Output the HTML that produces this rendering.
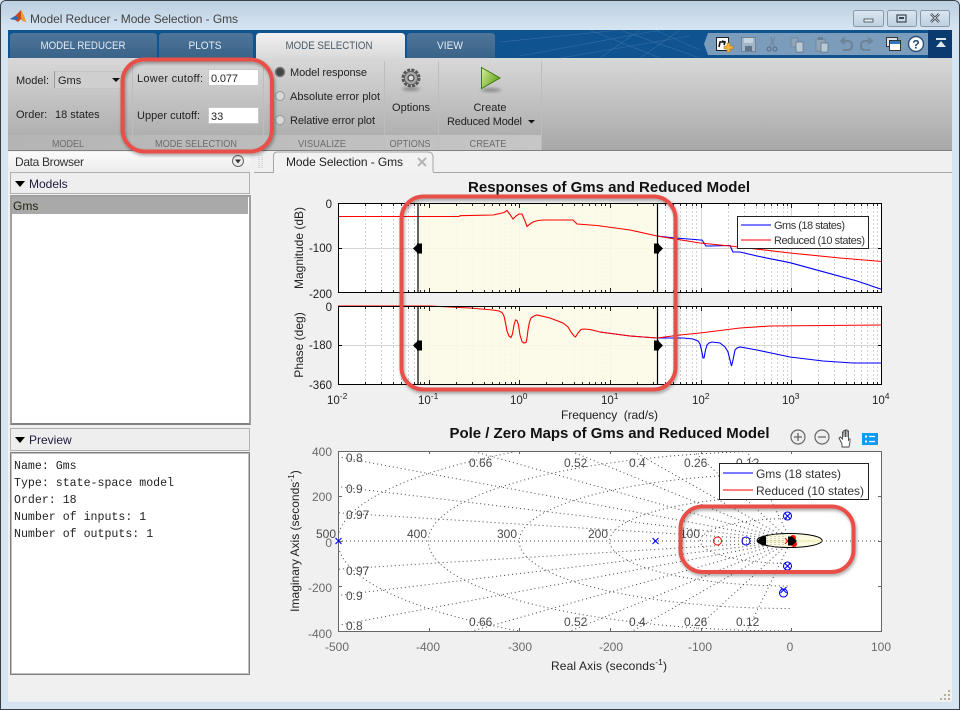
<!DOCTYPE html>
<html><head><meta charset="utf-8"><title>Model Reducer</title>
<style>
html,body{margin:0;padding:0;background:#d6e4f1}
body{width:960px;height:710px;overflow:hidden;position:relative;font-family:"Liberation Sans",sans-serif}
.a{position:absolute}
svg text{font-family:"Liberation Sans",sans-serif}
</style></head><body>
<div class="a" style="left:0;top:0;width:958px;height:708px;border:1px solid #3a3f44;border-radius:6px 6px 0 0;background:#d6e4f1"></div>
<div class="a" style="left:1px;top:1px;width:958px;height:29px;border-radius:5px 5px 0 0;background:linear-gradient(#bccfe0,#d6e5f2)"></div>
<div class="a" style="left:8px;top:30px;width:944px;height:28px;background:#0f5391"></div>
<div class="a" style="left:928px;top:30px;width:24px;height:28px;background:#0b3a70"></div>
<div class="a" style="left:8px;top:58px;width:944px;height:92px;background:linear-gradient(#d8d8d8,#a8a8a8)"></div>
<div class="a" style="left:8px;top:135px;width:533px;height:15px;background:linear-gradient(90deg,#b4b4b4,#c6c6c6)"></div>
<div class="a" style="left:8px;top:150px;width:944px;height:552px;background:#f0f0f0;border-top:1px solid #808080;box-sizing:border-box"></div>
<div class="a" style="left:9px;top:152px;width:241px;height:20px;background:linear-gradient(#fbfbfb,#ececec)"></div>
<div class="a" style="left:254px;top:172px;width:698px;height:1px;background:#a6a6a6"></div>
<div class="a" style="left:10px;top:172px;width:238px;height:20px;border:1px solid #b0b0b0;background:#eee"></div>
<div class="a" style="left:10px;top:195px;width:237px;height:226px;border:2px solid #8a8a8a;border-color:#a0a0a0 #a0a0a0 #808080 #a0a0a0;background:#fff"></div>
<div class="a" style="left:12px;top:197px;width:236px;height:17px;background:#a9a9a9"></div>
<div class="a" style="left:10px;top:428px;width:238px;height:21px;border:1px solid #b0b0b0;background:#eee"></div>
<div class="a" style="left:10px;top:452px;width:238px;height:221px;border:1px solid #808080;background:#fff;box-shadow:inset 0 0 0 1px #c0c0c0"></div>

<svg class="a" style="left:0;top:0" width="960" height="710" viewBox="0 0 960 710" xmlns="http://www.w3.org/2000/svg">
<defs>
<linearGradient id="tb" x1="0" y1="0" x2="0" y2="1"><stop offset="0" stop-color="#4f7599"/><stop offset="1" stop-color="#3a6389"/></linearGradient>
<linearGradient id="ta" x1="0" y1="0" x2="0" y2="1"><stop offset="0" stop-color="#f0f0f0"/><stop offset="1" stop-color="#dadada"/></linearGradient>
<linearGradient id="pl" x1="0" y1="0" x2="1" y2="0.6"><stop offset="0" stop-color="#d8ee9c"/><stop offset="1" stop-color="#5fa31a"/></linearGradient>
<linearGradient id="wb" x1="0" y1="0" x2="0" y2="1"><stop offset="0" stop-color="#dbe6f0"/><stop offset="1" stop-color="#bfd0e0"/></linearGradient>
<clipPath id="c3"><rect x="338" y="451" width="544" height="180"/></clipPath>
<filter id="sh" x="-10%" y="-10%" width="120%" height="120%"><feDropShadow dx="1" dy="2" stdDeviation="1.6" flood-color="#000" flood-opacity=".35"/></filter>
<filter id="bl" x="-30%" y="-100%" width="160%" height="300%"><feGaussianBlur stdDeviation="1.5"/></filter>
<path id="m1" d="M27.5 0V89M43.5 0V89M55.5 0V89M63.5 0V89M70.5 0V89M76.5 0V89M82.5 0V89M86.5 0V89" fill="none" stroke="#d2d2d2" stroke-dasharray="2 2"/>
<path id="m2" d="M27.5 0V78M43.5 0V78M55.5 0V78M63.5 0V78M70.5 0V78M76.5 0V78M82.5 0V78M86.5 0V78" fill="none" stroke="#d2d2d2" stroke-dasharray="2 2"/>
<path id="tk" d="M27.5 0v2M43.5 0v2M55.5 0v2M63.5 0v2M70.5 0v2M76.5 0v2M82.5 0v2M86.5 0v2" fill="none" stroke="#222"/>
<g id="tks"><use href="#tk" x="338"/><use href="#tk" x="429"/><use href="#tk" x="519"/><use href="#tk" x="610"/><use href="#tk" x="701"/><use href="#tk" x="791"/></g>
</defs>

<!-- title bar -->
<g>
<path d="M10 19l5-3 3-3 3-3 3 6 2 6-3-1-2-2-3 3-3-2z" fill="#c8471c"/>
<path d="M10 19l5-3 3 1-1 3-2 0z" fill="#2a6db0"/>
<path d="M21 10l3 6 2 6-3-1-2-3z" fill="#f29a2a"/>
<text x="30" y="23" font-size="12" fill="#444" textLength="208">Model Reducer - Mode Selection - Gms</text>
<g fill="url(#wb)" stroke="#8799aa"><rect x="853.5" y="10.5" width="30" height="16" rx="2"/><rect x="887.5" y="10.5" width="29" height="16" rx="2"/><rect x="920.5" y="10.5" width="29" height="16" rx="2"/></g>
<rect x="864" y="19" width="9" height="3" fill="#e8eef4" stroke="#3c4650" stroke-width=".8"/>
<rect x="897" y="15" width="9" height="7" fill="none" stroke="#3c4650" stroke-width="1.2"/><rect x="899" y="17" width="5" height="2" fill="#3c4650"/>
<path d="M931 14l8 8M939 14l-8 8" stroke="#3c4650" stroke-width="2.4"/><path d="M931 14l8 8M939 14l-8 8" stroke="#e5edf4" stroke-width=".7"/>
</g>

<!-- tab strip -->
<g stroke="#3f74a8" stroke-width=".6" fill="none" opacity=".8">
<path d="M500 42L620 30M520 56L660 30M560 58L690 36M590 30L660 58M620 30L700 58M655 30L700 50M600 58L640 30M640 58L680 30"/>
</g>
<path d="M10 58V37q0-4 4-4H153q4 0 4 4V58z" fill="url(#tb)"/>
<path d="M159 58V37q0-4 4-4H249q4 0 4 4V58z" fill="url(#tb)"/>
<path d="M407 58V37q0-4 4-4H491q4 0 4 4V58z" fill="url(#tb)"/>
<path d="M256 58V37q0-4 4-4H401q4 0 4 4V58z" fill="url(#ta)"/>
<g font-size="11" text-anchor="middle">
<text x="83" y="49" fill="#e4ebf2" textLength="85" lengthAdjust="spacingAndGlyphs">MODEL REDUCER</text>
<text x="205" y="49" fill="#e4ebf2" textLength="33" lengthAdjust="spacingAndGlyphs">PLOTS</text>
<text x="329" y="49" fill="#4c5a68" textLength="87" lengthAdjust="spacingAndGlyphs">MODE SELECTION</text>
<text x="450" y="49" fill="#e4ebf2" textLength="26" lengthAdjust="spacingAndGlyphs">VIEW</text>
</g>

<!-- quick access -->
<path d="M708 33H928V55H708L704 44z" fill="#7b9cba"/>
<g>
<rect x="716.5" y="37.5" width="12" height="13" fill="#fff" stroke="#222"/>
<path d="M719 47l1-5h5M722 41l3 1-1 3" stroke="#111" stroke-width="1.6" fill="none"/>
<path d="M727 43h3v3h3v3h-3v3h-3v-3h-3v-3h3z" fill="#f4b33c" stroke="#a9701a" stroke-width=".5"/>
<g fill="#a3b6c8" stroke="#6f8296"><rect x="741.5" y="37.5" width="14" height="14"/></g>
<rect x="744" y="38" width="9" height="5" fill="#c7d3de"/><rect x="745" y="46" width="7" height="5" fill="#5f7488"/>
<path d="M775 37l-5 9M771 37l3 9" stroke="#6f8499" stroke-width="1"/><circle cx="769" cy="49" r="2" fill="none" stroke="#566b80"/><circle cx="775" cy="49" r="2" fill="none" stroke="#566b80"/>
<rect x="791" y="38" width="7" height="9" fill="#90a5b8" stroke="#6a7f93" stroke-width=".7"/><rect x="796" y="42" width="7" height="10" fill="#b9c8d5" stroke="#5d7286" stroke-width=".7"/>
<rect x="816" y="39" width="9" height="12" fill="#90a5b8" stroke="#6a7f93" stroke-width=".7"/><rect x="818" y="37" width="5" height="3" fill="#6a7f93"/><rect x="821" y="43" width="7" height="9" fill="#b9c8d5" stroke="#5d7286" stroke-width=".7"/>
<path d="M842 41h6q4 0 4 4.500t-4 4.500h-5M845 38l-4 3 4 3" fill="none" stroke="#6d8397" stroke-width="2"/>
<path d="M871 41h-6q-4 0-4 4.500t4 4.500h5M868 38l4 3-4 3" fill="none" stroke="#6d8397" stroke-width="2"/>
<rect x="886.500" y="37.500" width="11" height="9" fill="#dfe6ec" stroke="#333"/><rect x="889.500" y="40.500" width="11" height="10" fill="#fff" stroke="#333"/><rect x="890" y="41" width="10" height="3" fill="#2f79c2"/>
<circle cx="916" cy="44" r="7.500" fill="#fff" stroke="#2c4f75" stroke-width="1.400"/>
<text x="916" y="48.500" font-size="12" font-weight="bold" text-anchor="middle" fill="#20466e">?</text>
<rect x="936" y="38" width="10" height="2" fill="#dfe7ee"/><path d="M936 47l5-6 5 6z" fill="#dfe7ee"/>
</g>

<!-- ribbon -->
<path d="M132.500 61V150M263.500 61V150M384.500 61V150M438.500 61V150M541.500 61V150" stroke="#bdbdbd"/>
<g font-size="11" fill="#222">
<text x="16" y="84">Model:</text>
<rect x="54.500" y="71.500" width="70" height="17" fill="#cfcfcf" stroke="#bbb" stroke-width=".5"/>
<path d="M54.500 71v17" stroke="#999"/>
<text x="58" y="84">Gms</text>
<path d="M112 78h8l-4 4z" fill="#111"/>
<text x="16" y="118">Order:</text><text x="55" y="118">18 states</text>
<text x="137" y="82" textLength="66">Lower cutoff:</text>
<text x="137" y="119" textLength="63">Upper cutoff:</text>
<rect x="208.500" y="69.500" width="50" height="16" fill="#fff" stroke="#c8c8c8"/>
<rect x="208.500" y="107.500" width="50" height="16" fill="#fff" stroke="#c8c8c8"/>
<text x="211" y="82" textLength="27">0.077</text><text x="211" y="120">33</text>
<text x="290" y="76" textLength="77">Model response</text>
<text x="290" y="100" textLength="90">Absolute error plot</text>
<text x="290" y="124" textLength="85">Relative error plot</text>
<text x="411" y="111" text-anchor="middle">Options</text>
<text x="490" y="111" text-anchor="middle">Create</text>
<text x="447" y="125" textLength="75">Reduced Model</text>
<path d="M528 120h7l-3.500 3.500z" fill="#111"/>
</g>
<g fill="#d8d8d8" stroke="#9a9a9a"><circle cx="280" cy="96" r="4.500"/><circle cx="280" cy="120" r="4.500"/></g>
<circle cx="280" cy="72" r="4.500" fill="#444" stroke="#777" stroke-width="1.500"/>
<ellipse cx="411" cy="89" rx="9" ry="1.500" fill="#777" filter="url(#bl)"/>
<g>
<circle cx="411" cy="78" r="8" fill="none" stroke="#555" stroke-width="3" stroke-dasharray="3 1.200"/>
<circle cx="411" cy="78" r="6.500" fill="#a8a8a8" stroke="#666"/>
<circle cx="411" cy="78" r="3" fill="#ddd" stroke="#444" stroke-width="1.200"/>
</g>
<ellipse cx="491" cy="90" rx="10" ry="1.500" fill="#777" filter="url(#bl)"/>
<path d="M481.500 67.500L500 78 481.500 88.500z" fill="url(#pl)" stroke="#3f7a14"/>
<g font-size="10.500" fill="#6c6c6c" text-anchor="middle">
<text x="68" y="147" textLength="32" lengthAdjust="spacingAndGlyphs">MODEL</text><text x="196" y="147" textLength="82" lengthAdjust="spacingAndGlyphs">MODE SELECTION</text><text x="322" y="147" textLength="48" lengthAdjust="spacingAndGlyphs">VISUALIZE</text><text x="410" y="147" textLength="41" lengthAdjust="spacingAndGlyphs">OPTIONS</text><text x="488" y="147" textLength="37" lengthAdjust="spacingAndGlyphs">CREATE</text>
</g>

<!-- left panel -->
<text x="15" y="166" font-size="12" fill="#333" textLength="69">Data Browser</text>
<circle cx="238" cy="161" r="5.500" fill="#eee" stroke="#666"/><path d="M235 159.500h6l-3 4z" fill="#333"/>
<path d="M15 181h10l-5 6z" fill="#000"/><text x="29" y="188" font-size="12" fill="#1d1a3d">Models</text>
<text x="13" y="210" font-size="12" fill="#221">Gms</text>
<path d="M15 437h10l-5 6z" fill="#000"/><text x="29" y="444" font-size="12" fill="#1d1a3d">Preview</text>
<g font-size="11.600" fill="#222">
<text x="14" y="469" style="font-family:'Liberation Mono',monospace">Name: Gms</text>
<text x="14" y="486" style="font-family:'Liberation Mono',monospace">Type: state-space model</text>
<text x="14" y="503" style="font-family:'Liberation Mono',monospace">Order: 18</text>
<text x="14" y="520" style="font-family:'Liberation Mono',monospace">Number of inputs: 1</text>
<text x="14" y="537" style="font-family:'Liberation Mono',monospace">Number of outputs: 1</text>
</g>

<!-- doc tab -->
<path d="M273.500 172.500V156q0-4 4-4H428q4 0 5 4V173" fill="#f2f2f2" stroke="#a6a6a6"/>
<path d="M274 172.500h159" stroke="#f0f0f0" stroke-width="1.500"/>
<path d="M259 155v14M262 155v14" stroke="#bbb" stroke-dasharray="1 1"/>
<text x="286" y="166" font-size="12" fill="#222" textLength="117">Mode Selection - Gms</text>
<path d="M418 158l8 8M426 158l-8 8" stroke="#b5b5b5" stroke-width="2"/>

<!-- Bode plot -->
<text x="609" y="192" font-size="15" font-weight="bold" text-anchor="middle" fill="#111" textLength="282" lengthAdjust="spacingAndGlyphs">Responses of Gms and Reduced Model</text>
<rect x="338" y="203" width="544" height="89" fill="#fff"/>
<rect x="338" y="306" width="544" height="78" fill="#fff"/>
<g transform="translate(0,203)"><use href="#m1" x="338"/><use href="#m1" x="429"/><use href="#m1" x="519"/><use href="#m1" x="610"/><use href="#m1" x="701"/><use href="#m1" x="791"/></g>
<g transform="translate(0,306)"><use href="#m2" x="338"/><use href="#m2" x="429"/><use href="#m2" x="519"/><use href="#m2" x="610"/><use href="#m2" x="701"/><use href="#m2" x="791"/></g>
<path d="M429.500 203V292M519.500 203V292M610.500 203V292M701.500 203V292M791.500 203V292M429.500 306V384M519.500 306V384M610.500 306V384M701.500 306V384M791.500 306V384M338 248.500H882M338 345.500H882" stroke="#d6d6d6"/>
<rect x="418" y="203" width="239" height="89" fill="#fcfbe6" opacity=".88"/>
<rect x="418" y="306" width="239" height="78" fill="#fcfbe6" opacity=".88"/>
<polyline fill="none" stroke="#0000ff" stroke-width="1.100" points="657,236 675,238 695,239.500 700,240 702,240 704,243 706,246 710,246 730,245.500 733,252 740,252 757,256 790,262.700 823,271.700 857,281 882,289.500"/>
<polyline fill="none" stroke="#ff0000" stroke-width="1.100" points="338,216.500 459,216.500 460,215.700 493,215 500,213.500 504,212.500 507,210.500 510,214.500 513,219 516,216 519,214 522,214 525,221 527,226.500 530,224 533,222 538,220.500 543,220 573,220 577,224 597,225.500 630,230 657,236 675,239 700,243 730,246 790,253 840,258 882,261.500"/>
<polyline fill="none" stroke="#0000ff" stroke-width="1.100" points="600,332 630,336 657,338 683,338 693,339 698,341 700,344 701.500,350 703,358 704,358 705.500,350 707,345 709,343 712,342 720,343 725,347 728,352 730,360 731.500,366 733,360 735,350 737,348 740,347 757,350 790,357 823,361 853,363 882,363"/>
<polyline fill="none" stroke="#ff0000" stroke-width="1.100" points="338,306 430,306 450,307 470,308 493,310 499,311 502,312.500 504,316 505.500,323 507,331 509,336 511,337.500 512.500,334 514,325 515.500,320 517,320.500 518.500,325 520,335 522,341.500 524,343 526,342.500 527,338 528,330 529.500,322 531,318 534,316 537,315 550,318 563,323 568,327 571,332 574,336 575.500,337 578,333 581,329.500 584,329 590,329.500 600,332 630,336 657,338 680,335 700,333 740,328 770,326 882,325"/>
<g transform="translate(0,204)"><use href="#tks"/></g>
<g transform="translate(0,290)"><use href="#tks"/></g>
<g transform="translate(0,307)"><use href="#tks"/></g>
<g transform="translate(0,382)"><use href="#tks"/></g>
<path d="M429.500 204v4M519.500 204v4M610.500 204v4M701.500 204v4M791.500 204v4M429.500 292v-4M519.500 292v-4M610.500 292v-4M701.500 292v-4M791.500 292v-4M429.500 307v4M519.500 307v4M610.500 307v4M701.500 307v4M791.500 307v4M429.500 384v-4M519.500 384v-4M610.500 384v-4M701.500 384v-4M791.500 384v-4" stroke="#222"/>
<path d="M338 248.500h4M878 248.500h4M338 345.500h4M878 345.500h4" stroke="#000"/>
<rect x="338.500" y="203.500" width="543" height="89" fill="none" stroke="#000"/>
<rect x="338.500" y="306.500" width="543" height="78" fill="none" stroke="#000"/>
<path d="M418 203V292M657.500 203V292M418 306V384M657.500 306V384" stroke="#000" stroke-width="1.200"/>
<g fill="#000">
<path d="M413 248.500l4-4v-1h5v10h-5v-1z"/><path d="M413 345.500l4-4v-1h5v10h-5v-1z"/>
<path d="M663 248.500l-4-4v-1h-5v10h5v-1z"/><path d="M663 345.500l-4-4v-1h-5v10h5v-1z"/>
</g>
<g font-size="11.500" fill="#222" text-anchor="end">
<text x="332" y="208">0</text><text x="332" y="252">-100</text><text x="332" y="298">-200</text>
<text x="332" y="311">0</text><text x="332" y="349">-180</text><text x="332" y="389">-360</text>
</g>
<text transform="translate(303,248) rotate(-90)" font-size="12" fill="#222" text-anchor="middle">Magnitude (dB)</text>
<text transform="translate(303,345) rotate(-90)" font-size="12" fill="#222" text-anchor="middle">Phase (deg)</text>
<g font-size="11.500" fill="#222">
<text x="327" y="404">10<tspan font-size="8.500" dy="-5">-2</tspan></text>
<text x="418" y="404">10<tspan font-size="8.500" dy="-5">-1</tspan></text>
<text x="510" y="404">10<tspan font-size="8.500" dy="-5">0</tspan></text>
<text x="601" y="404">10<tspan font-size="8.500" dy="-5">1</tspan></text>
<text x="692" y="404">10<tspan font-size="8.500" dy="-5">2</tspan></text>
<text x="782" y="404">10<tspan font-size="8.500" dy="-5">3</tspan></text>
<text x="872" y="404">10<tspan font-size="8.500" dy="-5">4</tspan></text>
</g>
<text x="561" y="419" font-size="12" fill="#222" textLength="97" xml:space="preserve">Frequency  (rad/s)</text>
<rect x="737.500" y="216.500" width="131" height="32" fill="#fff" stroke="#222"/>
<path d="M741 225h30" stroke="#2a2aff" stroke-width="1.200"/><path d="M741 240h30" stroke="#ff3030" stroke-width="1.200"/>
<text x="774" y="229" font-size="11" fill="#333" textLength="71">Gms (18 states)</text>
<text x="774" y="244" font-size="11" fill="#333" textLength="91">Reduced (10 states)</text>

<!-- Pole zero -->
<text x="609.500" y="438" font-size="15" font-weight="bold" text-anchor="middle" fill="#111" textLength="320" lengthAdjust="spacingAndGlyphs">Pole / Zero Maps of Gms and Reduced Model</text>
<rect x="338" y="451" width="544" height="180" fill="#fff"/>
<g clip-path="url(#c3)" fill="none" stroke="#444" stroke-dasharray="1 3">
<path d="M338 541H882"/>
<path d="M791 541L338 512.800M791 541L338 569.200M791 541L338 486.600M791 541L338 595.400M791 541L338 456.700M791 541L338 625.300M791 541L472.200 451M791 541L472.200 631M791 541L570.300 451M791 541L570.300 631M791 541L632.700 451M791 541L632.700 631M791 541L693.300 451M791 541L693.300 631M791 541L747.100 451M791 541L747.100 631"/>
<path d="M791 428.500A453.300 112.500 0 0 0 791 653.500M791 451A362.700 90 0 0 0 791 631M791 473.500A272 67.500 0 0 0 791 608.500M791 496A181.300 45 0 0 0 791 586M791 518.500A90.700 22.500 0 0 0 791 563.500"/>
</g>
<g font-size="12" fill="#4a4a4a">
<text x="346" y="462">0.8</text><text x="346" y="493">0.9</text><text x="346" y="519">0.97</text>
<text x="346" y="575">0.97</text><text x="346" y="600">0.9</text><text x="346" y="630">0.8</text>
<text x="469" y="467">0.66</text><text x="564" y="467">0.52</text><text x="629" y="467">0.4</text><text x="684" y="467">0.26</text><text x="736" y="467">0.12</text>
<text x="469" y="626">0.66</text><text x="564" y="626">0.52</text><text x="629" y="626">0.4</text><text x="684" y="626">0.26</text><text x="736" y="626">0.12</text>
<text x="316" y="538">500</text><text x="407" y="538">400</text><text x="497" y="538">300</text><text x="588" y="538">200</text><text x="680" y="538">100</text>
</g>
<rect x="338.500" y="451.500" width="543" height="180" fill="none" stroke="#666"/>
<path d="M429.500 451v3M519.500 451v3M610.500 451v3M701.500 451v3M791.500 451v3M429.500 631v-3M519.500 631v-3M610.500 631v-3M701.500 631v-3M791.500 631v-3M338 496.500h4M338 541.500h4M338 586.500h4M882 496.500h-4M882 541.500h-4M882 586.500h-4" stroke="#666"/>
<g font-size="12" fill="#6a6a6a" text-anchor="end">
<text x="332" y="456">400</text><text x="332" y="501">200</text><text x="332" y="547">0</text><text x="332" y="592">-200</text><text x="332" y="638">-400</text>
</g>
<g font-size="12" fill="#6a6a6a" text-anchor="middle">
<text x="337" y="651">-500</text><text x="428" y="651">-400</text><text x="520" y="651">-300</text><text x="611" y="651">-200</text><text x="700" y="651">-100</text><text x="790" y="651">0</text><text x="881" y="651">100</text>
</g>
<text x="551" y="670" font-size="12" fill="#222" textLength="116">Real Axis (seconds<tspan font-size="8.500" dy="-5">-1</tspan><tspan dy="5">)</tspan></text>
<text transform="translate(299,541) rotate(-90)" font-size="12" fill="#222" text-anchor="middle">Imaginary Axis (seconds<tspan font-size="8.500" dy="-5">-1</tspan><tspan dy="5">)</tspan></text>
<rect x="719.500" y="463.500" width="149" height="36" fill="#fff" stroke="#222"/>
<path d="M723 473h30" stroke="#2a2aff" stroke-width="1.200"/><path d="M723 490h30" stroke="#ff3030" stroke-width="1.200"/>
<text x="756" y="478" font-size="12" fill="#333" textLength="85">Gms (18 states)</text>
<text x="756" y="495" font-size="12" fill="#333" textLength="108">Reduced (10 states)</text>

<!-- markers -->
<ellipse cx="789.500" cy="540.500" rx="32.500" ry="7" fill="#fcfbe0" stroke="#000"/>
<path d="M766 541H822" stroke="#e8e6a8"/>
<path d="M767 534v14M771 534v14M775 534v14M779 534v14M783 534v14" stroke="#aaa" stroke-dasharray="1 1"/>
<g fill="none" stroke="#00f" stroke-width="1.100">
<path d="M652.500 538l6 6M658.500 538l-6 6"/>
<circle cx="746" cy="541" r="4"/>
<circle cx="787.500" cy="516" r="4"/><path d="M784.500 513l6 6M790.500 513l-6 6"/>
<circle cx="787.500" cy="566" r="4"/><path d="M784.500 563l6 6M790.500 563l-6 6"/>
<circle cx="783.500" cy="593" r="4"/><path d="M780.500 587l6 6M786.500 587l-6 6"/>
<path d="M335.500 538l6 6M341.500 538l-6 6"/>
</g>
<circle cx="717.500" cy="541" r="4" fill="none" stroke="#f00"/>
<path d="M785 538l5 6M790 538l-5 6" stroke="#f00"/>
<circle cx="793" cy="538" r="3" fill="#f00"/><circle cx="794" cy="544" r="3" fill="#f00"/>
<g fill="#000"><path d="M757 541l5-4.500h4v9h-4z"/><path d="M797 541l-5-4.500h-4v9h4z"/></g>

<!-- plot tools -->
<g fill="#eee" stroke="#666" stroke-width="1.200"><circle cx="798" cy="437" r="7"/><circle cx="822" cy="437" r="7"/></g>
<path d="M794 437h8M798 433v8M818 437h8" stroke="#666" stroke-width="1.300"/>
<path d="M842 444l-3-6 1.500-1 2 2v-7h1.500v5-6.500h1.500v6.500-7h1.500v7-6h1.500v7 3-2h1.500v3l-1 5h-7z" fill="#fff" stroke="#444" stroke-width=".9"/>
<rect x="862" y="433" width="16" height="12" fill="#0a9bf5"/>
<path d="M865 435.500h2v2h-2zM865 440.500h2v2h-2z" fill="#fff"/><path d="M869 436.500h6M869 441.500h6" stroke="#fff" stroke-width="1.200"/>

<!-- resize grip -->
<g fill="#b4b09c"><rect x="948" y="690" width="2" height="2"/><rect x="944" y="694" width="2" height="2"/><rect x="948" y="694" width="2" height="2"/><rect x="940" y="698" width="2" height="2"/><rect x="944" y="698" width="2" height="2"/><rect x="948" y="698" width="2" height="2"/></g>

<!-- callouts -->
<g fill="none" stroke="#e8504a" stroke-width="4" filter="url(#sh)">
<rect x="122.500" y="59.500" width="149.500" height="92" rx="22"/>
<rect x="401.500" y="196.500" width="274" height="193" rx="22"/>
<rect x="680.500" y="506.500" width="173" height="65.500" rx="22"/>
</g>
</svg>
</body></html>
